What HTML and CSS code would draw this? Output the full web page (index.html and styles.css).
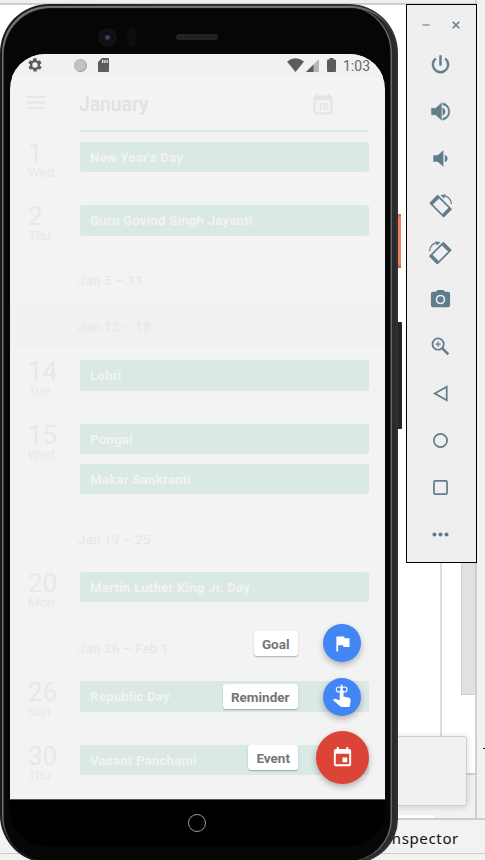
FILE: index.html
```html
<!DOCTYPE html>
<html lang="en">
<head>
<meta charset="utf-8">
<title>Calendar on emulator</title>
<link rel="stylesheet" href="styles.css">
</head>
<body>
<div class="desktop">
  <div class="ide-top"></div>
  <div class="ide-right"><i></i></div>
  <div class="gutter-line"></div>
  <div class="scroll-thumb"></div>
  <div class="ide-lower"></div>
  <div class="popup"></div>
  <div class="tab-strip"></div>
  <div class="status"><span>Inspector</span></div>
  <div class="status-end"></div>

  <div class="side-button power"></div>
  <div class="side-button volume"></div>
  <main class="phone">
    <div class="bezel">
      <div class="sensors">
        <i class="camera"></i><i class="sensor"></i><i class="speaker"></i>
      </div>
      <section class="screen">
        <header class="statusbar">
          <svg class="gear" viewBox="0 0 24 24"><path d="M19.400 13c0-.3.1-.6.1-1s0-.7-.1-1l2.100-1.600c.2-.2.2-.4.1-.6l-2-3.500c-.1-.2-.4-.3-.6-.2l-2.500 1c-.5-.4-1.100-.7-1.700-1l-.4-2.600c0-.3-.2-.5-.5-.5h-4c-.2 0-.4.2-.5.4l-.4 2.700c-.6.2-1.100.6-1.700 1l-2.500-1c-.2-.1-.5 0-.6.2l-2 3.500c-.1.2-.1.500.1.6L4.600 11c0 .3-.1.7-.1 1s0 .7.1 1l-2.100 1.600c-.2.2-.2.4-.1.600l2 3.500c.1.200.4.300.6.200l2.500-1c.5.400 1.100.700 1.700 1l.4 2.600c0 .2.200.4.500.4h4c.2 0 .5-.2.500-.4l.4-2.600c.6-.3 1.200-.6 1.700-1l2.500 1c.2.1.5 0 .6-.2l2-3.500c.1-.2.100-.5-.1-.6L19.400 13zM12 16a4 4 0 1 1 0-8 4 4 0 0 1 0 8z"/></svg>
          <i class="sync"></i>
          <svg class="sd" viewBox="0 0 11 14"><path fill-rule="evenodd" d="M4 0h6q1 0 1 1v12q0 1-1 1H1q-1 0-1-1V4zM4 2v3h1.300V2zM6.300 2v3h1.200V2zM8.500 2v3h1.200V2z"/></svg>
          <span class="grow"></span>
          <svg class="wifi" viewBox="0 0 17 14"><path d="M0 3.500Q8.500-3 17 3.500L8.500 14z"/></svg>
          <svg class="cell" viewBox="0 0 13 13"><path d="M13 0v13H0z" opacity=".4"/><path d="M7.500 5.500V13H0z"/></svg>
          <svg class="battery" viewBox="0 0 9 14"><path d="M2.500 0h4v1.500H8q1 0 1 1V13q0 1-1 1H1q-1 0-1-1V2.500q0-1 1-1h1.500z"/></svg>
          <span class="clock">1:03</span>
        </header>
        <div class="appbar">
          <svg class="menu" viewBox="0 0 18 13"><path d="M0 1h18M0 6.500h18M0 12h18"/></svg>
          <h1>January</h1>
          <svg class="today" viewBox="0 0 20 22"><path class="cal" fill-rule="evenodd" d="M3 1h2v1.500h10V1h2v1.500q2.500 0 2.500 2.500v14q0 2.500-2.500 2.500H3Q.5 21.500.5 19V5Q.5 2.500 3 2.500zM2.500 7v12.500h15V7z"/><text x="10" y="17" text-anchor="middle">10</text></svg>
        </div>
        <div class="agenda">
          <div class="event cut"></div>
          <article class="day"><div class="date"><b>1</b><span>Wed</span></div><div class="events"><p class="event">New Year's Day</p></div></article>
          <article class="day last"><div class="date"><b>2</b><span>Thu</span></div><div class="events"><p class="event">Guru Govind Singh Jayanti</p></div></article>
          <div class="week">Jan 5 – 11</div>
          <div class="week shaded">Jan 12 – 18</div>
          <article class="day first"><div class="date"><b>14</b><span>Tue</span></div><div class="events"><p class="event">Lohri</p></div></article>
          <article class="day double"><div class="date"><b>15</b><span>Wed</span></div><div class="events"><p class="event">Pongal</p><p class="event">Makar Sankranti</p></div></article>
          <div class="week">Jan 19 – 25</div>
          <article class="day first last"><div class="date"><b>20</b><span>Mon</span></div><div class="events"><p class="event">Martin Luther King Jr. Day</p></div></article>
          <div class="week tall">Jan 26 – Feb 1</div>
          <article class="day first"><div class="date"><b>26</b><span>Sun</span></div><div class="events"><p class="event">Republic Day</p></div></article>
          <article class="day last"><div class="date"><b>30</b><span>Thu</span></div><div class="events"><p class="event">Vasant Panchami</p></div></article>
        </div>
        <nav class="speed-dial">
          <div class="action"><span class="chip">Goal</span><button class="fab"><svg viewBox="0 0 24 24"><path d="M14.400 6 14 4H5v17h2v-7h5.600l.4 2h7V6z"/></svg></button></div>
          <div class="action"><span class="chip">Reminder</span><button class="fab"><svg viewBox="0 0 24 24"><g fill="none" stroke="#fff" stroke-width="1.300"><circle cx="7.800" cy="4" r="2.900"/><circle cx="14.200" cy="4" r="2.900"/></g><path d="M10-1.500h2v5h-2zM8.800 5q2.200-1.800 4.400 0v7l6.300 1.500q2 .6 1.800 2.500L20.500 22.500q-.2 1.500-1.500 1.500h-8q-1 0-1.700-.8L1 16l1-1q.6-.6 1.500-.4l5.300 1.800z"/></svg></button></div>
          <div class="action main"><span class="chip">Event</span><button class="fab"><svg viewBox="0 0 24 24"><path d="M17 12h-5v5h5zM16 1v2H8V1H6v2H5a2 2 0 0 0-2 2v14c0 1.100.9 2 2 2h14a2 2 0 0 0 2-2V5a2 2 0 0 0-2-2h-1V1zm3 18H5V8h14z"/></svg></button></div>
        </nav>
      </section>
      <footer class="navbar"><i></i></footer>
    </div>
  </main>

  <aside class="toolbar">
    <div class="window-buttons">
      <svg viewBox="0 0 8 8"><path d="M.5 4h7" opacity=".7"/></svg>
      <svg viewBox="0 0 8 8"><path d="m.7.7 6.600 6.600m0-6.600L.7 7.300"/></svg>
    </div>
    <svg class="tool" viewBox="0 0 24 24"><path d="M13 2.500h-2v10.500h2zM17.800 5.200l-1.400 1.400A7 7 0 1 1 7.600 6.600L6.200 5.200A9 9 0 1 0 17.800 5.200z" stroke="#607d8b" stroke-width=".5"/></svg>
    <svg class="tool" viewBox="0 0 24 24"><path d="M2.500 8.500v7h4.500l6 5.500V3L7 8.500zm14.500 3.500A4.500 4.500 0 0 0 14.300 8v8a4.500 4.500 0 0 0 2.700-4zM14.300 2.800v2.300a7 7 0 0 1 0 13.800v2.300a9.400 9.400 0 0 0 0-18.400z" stroke="#607d8b" stroke-width=".4"/></svg>
    <svg class="tool" viewBox="0 0 24 24"><path d="M19.500 12A4.500 4.500 0 0 0 16.500 8v8a4.500 4.500 0 0 0 3-4zM4.500 8.500v7h4.500l6 5V3.500L9 8.500z"/></svg>
    <svg class="tool rotate" viewBox="0 0 24 24"><g transform="rotate(45 12 12.500)"><path fill-rule="evenodd" d="M2.500 6.200h19.500q1 0 1 1v10.600q0 1-1 1H2.500q-1 0-1-1V7.200q0-1 1-1zM5.300 8v9h13.900V8z"/></g><path class="arc" d="M13.500 1.500Q22.500 2 23.500 10.500"/><path d="m12 1.200 5.500-1-1.700 4.600z"/></svg>
    <svg class="tool rotate" viewBox="0 0 24 24"><g transform="translate(24 0) scale(-1 1)"><g transform="rotate(45 12 12.500)"><path fill-rule="evenodd" d="M2.500 6.200h19.500q1 0 1 1v10.600q0 1-1 1H2.500q-1 0-1-1V7.200q0-1 1-1zM5.300 8v9h13.900V8z"/></g><path class="arc" d="M13.500 1.500Q22.500 2 23.500 10.500"/><path d="m12 1.200 5.500-1-1.700 4.600z"/></g></svg>
    <svg class="tool" viewBox="0 0 24 24"><circle cx="12" cy="12" r="3.300"/><path fill-rule="evenodd" d="M9 2 7.200 4H4a2 2 0 0 0-2 2v12c0 1.100.9 2 2 2h16a2 2 0 0 0 2-2V6a2 2 0 0 0-2-2h-3.200L15 2zm3 15a5 5 0 1 1 0-10 5 5 0 0 1 0 10z"/></svg>
    <svg class="tool" viewBox="0 0 24 24"><g class="line"><circle cx="9.500" cy="9.500" r="5.900"/><path d="m14 14 6.200 6.200" stroke-width="2.600"/><path d="M9.500 6.800v5.400M6.800 9.500h5.400" stroke-width="1.300"/></g></svg>
    <svg class="tool" viewBox="0 0 24 24"><path class="line" d="M18.500 5v14L6 12z"/></svg>
    <svg class="tool" viewBox="0 0 24 24"><circle class="line" cx="12" cy="12" r="6.900"/></svg>
    <svg class="tool" viewBox="0 0 24 24"><rect class="line" x="5.200" y="5.200" width="13.600" height="13.600" rx="1"/></svg>
    <svg class="tool" viewBox="0 0 24 24"><circle cx="5.700" cy="12" r="2.100"/><circle cx="12" cy="12" r="2.100"/><circle cx="18.300" cy="12" r="2.100"/></svg>
  </aside>
</div>
</body>
</html>
```
FILE: styles.css
```css
* { box-sizing: border-box; }
body { margin: 0; font-family: Roboto, "Liberation Sans", sans-serif; }
p, h1 { margin: 0; }
svg { display: block; flex: none; }

/* Windows behind the emulator */
.desktop { position: relative; width: 485px; height: 860px; overflow: hidden; background: #fff; }
.desktop > * { position: absolute; }
.ide-top { left: 0; top: 0; width: 485px; height: 5px; background: #efefef; border-bottom: 2px solid #cdcdcd; }
.ide-right { left: 475px; top: 0; width: 10px; height: 819px; padding: 748px 0 0 6px; background: #f1f1f1; border-left: 2px solid #d0d0d0; }
.ide-right i { display: block; width: 2px; height: 1px; background: #222; }
.gutter-line { left: 440px; top: 560px; width: 2px; height: 180px; background: #dcdcdc; }
.scroll-thumb { left: 461px; top: 560px; width: 15px; height: 135px; background: #e1e1e1; border: 1px solid #cfcfcf; }
.ide-lower { left: 390px; top: 773px; width: 85px; height: 46px; background: #f2f2f2; border-top: 2px solid #d0d0d0; }
.popup { left: 380px; top: 736px; width: 87px; height: 70px; background: #f0f0f0; border: 1px solid #cfcfcf; border-radius: 2px; box-shadow: 0 1px 7px rgba(0,0,0,.16); }
.tab-strip { left: 385px; top: 815px; width: 49px; height: 3px; background: #fff; }
.status { left: 0; top: 818px; width: 485px; height: 36px; padding-left: 386px; background: #f2f2f2; border-top: 2px solid #cdcdcd; border-bottom: 1px solid #cdcdcd; font: 15px/37px "Noto Sans", sans-serif; color: #111; letter-spacing: .65px; }
.status-end { left: 0; top: 854px; width: 485px; height: 6px; background: #f2f2f2; }

/* Phone hardware */
.side-button { left: 396px; }
.side-button.power { top: 214px; width: 5px; height: 54px; background: linear-gradient(#c65f49, #ee8067 8%, #ee8067 92%, #b45844); }
.side-button.volume { top: 322px; width: 6px; height: 107px; background: #252526; border-radius: 0 1px 1px 0; }
.phone { left: 0; top: 4px; width: 398px; height: 859px; padding: 2px 1px 2px 2px; border-radius: 49px 49px 44px 48px; background: linear-gradient(90deg, #17181a 0, #303133 50%, #303133 100%); }
.bezel { position: relative; height: 855px; padding: 48px 12px 0 8px; border-radius: 47px 47px 42px 46px; background: #060607; box-shadow: inset 1.500px 2px 1px #777, inset -1px 0 0 #303030, inset -5px 0 0 #2a2a2b, inset -6.500px 0 0 #66676a; }
.sensors { position: absolute; left: 96px; top: 19px; display: flex; align-items: center; height: 24px; }
.sensors .camera { width: 19px; height: 19px; border-radius: 50%; background: radial-gradient(circle, #50546c 0 .5px, #131522 3px, #0c0d12 5px, #131313 7px, #101010 9px); }
.sensors .sensor { width: 9px; height: 20px; margin-left: 10px; border-radius: 5px; background: #0d0d0e; }
.sensors .speaker { width: 42px; height: 6px; margin-left: 40px; border-radius: 3px; background: #222; }
.screen { position: relative; height: 745px; overflow: hidden; border-radius: 35px 35px 0 0; background: #f3f3f3; }
.navbar { display: flex; height: 47px; padding-right: 1px; justify-content: center; align-items: center; background: #000; border-top: 1px solid #555; border-radius: 0 0 36px 36px; }
.navbar i { width: 18px; height: 18px; border: 1px solid #999; border-radius: 50%; }

/* Status bar and app bar */
.statusbar { display: flex; align-items: center; height: 23px; padding: 0 15px 0 17px; background: #f1f1f1; fill: #5c5c5c; }
.gear { width: 16px; height: 16px; margin-top: -1px; }
.sync { width: 12px; height: 12px; margin: -1px 0 0 31px; border-radius: 50%; background: #c2c2c2; box-shadow: .5px .5px 0 .5px #9a9a9a; }
.sd { width: 11px; height: 14px; margin: -1px 0 0 12px; }
.grow { flex: 1; }
.wifi { width: 17px; height: 14px; margin-top: -1px; }
.cell { width: 13px; height: 13px; margin-left: 2px; }
.battery { width: 9px; height: 14px; margin: -1px 0 0 8px; }
.clock { width: 27px; margin-left: 7px; font-size: 14px; color: #666; white-space: nowrap; }
.appbar { display: flex; align-items: center; height: 53px; padding: 0 52px 0 17px; }
.menu { width: 18px; height: 13px; margin-top: -2px; stroke: #e6e6e6; stroke-width: 1.800; }
.appbar h1 { flex: 1; margin: 2px 0 0 34px; font-size: 19.300px; font-weight: 500; color: #e1e1e1; }
.today { width: 20px; height: 22px; }
.today .cal { fill: #e4e4e4; }
.today text { font-size: 9px; font-weight: 500; fill: #e0e0e0; }

/* Agenda */
.agenda { border-top: 1px solid #f0f0f0; }
.event { height: 30.500px; padding-left: 10px; border-radius: 2.500px; background: #dae8e6; font-size: 13.300px; line-height: 31px; font-weight: 700; letter-spacing: .17px; color: #f2f3f3; white-space: nowrap; }
.event.cut { height: 2px; margin: -1px 16px 9.500px 70px; border-radius: 0 0 2px 2px; background: #dae7ee; }
.day { display: flex; height: 63.500px; padding: 0 16px 0 18px; }
.day.last { height: 53px; }
.day.first { margin-top: 11px; }
.day.double { height: 93px; }
.date { display: flex; flex-direction: column; width: 52px; color: #e8e8e8; }
.date b { height: 23px; font-size: 26px; line-height: 23px; font-weight: 400; }
.date span { font-size: 13.300px; line-height: 15px; }
.events { display: flex; flex: 1; flex-direction: column; gap: 9.500px; }
.week { height: 44px; padding-left: 68px; font-size: 13.300px; line-height: 45px; letter-spacing: .2px; color: #e6e6e6; }
.week.shaded { height: 47px; line-height: 49px; background: #f1f1f1; }
.week.tall { height: 45.500px; line-height: 47px; }

/* Floating actions */
.speed-dial { position: absolute; right: 16px; bottom: 15px; display: flex; flex-direction: column; align-items: flex-end; }
.action { display: flex; align-items: center; height: 53.500px; gap: 25.500px; padding-right: 8px; }
.action.main { height: 54px; gap: 18px; padding-right: 0; margin-top: 6.500px; }
.chip { height: 25px; padding: 0 8px; border-radius: 3px; background: #fff; box-shadow: 0 1px 1.500px rgba(0,0,0,.28); font-size: 13.500px; line-height: 26px; font-weight: 700; color: #757575; }
.fab { display: flex; align-items: center; justify-content: center; flex: none; width: 38px; height: 38px; padding: 0; border: 0; border-radius: 50%; background: #4285f4; box-shadow: 0 3px 6px rgba(0,0,0,.28); }
.fab svg { width: 21px; height: 21px; overflow: visible; fill: #fff; }
.main .fab { width: 53px; height: 53px; background: #db4437; }
.main .fab svg { width: 23px; height: 23px; }

/* Emulator controls */
.toolbar { left: 406px; top: 4px; width: 71px; height: 559px; display: flex; flex-direction: column; align-items: center; padding-right: 2px; border: 1px solid #000; background: #efefef; fill: #607d8b; }
.window-buttons { display: flex; justify-content: space-between; align-items: center; width: 100%; height: 36px; padding: 3px 14px 0 15px; }
.window-buttons svg { width: 8px; height: 8px; stroke: #607d8b; stroke-width: 1.500; }
.tool { width: 23px; height: 23px; margin: 12px 0; overflow: visible; }
.rotate .arc { fill: none; stroke: #607d8b; stroke-width: 1.300; }
.line { fill: none; stroke: #607d8b; stroke-width: 1.800; }
```
